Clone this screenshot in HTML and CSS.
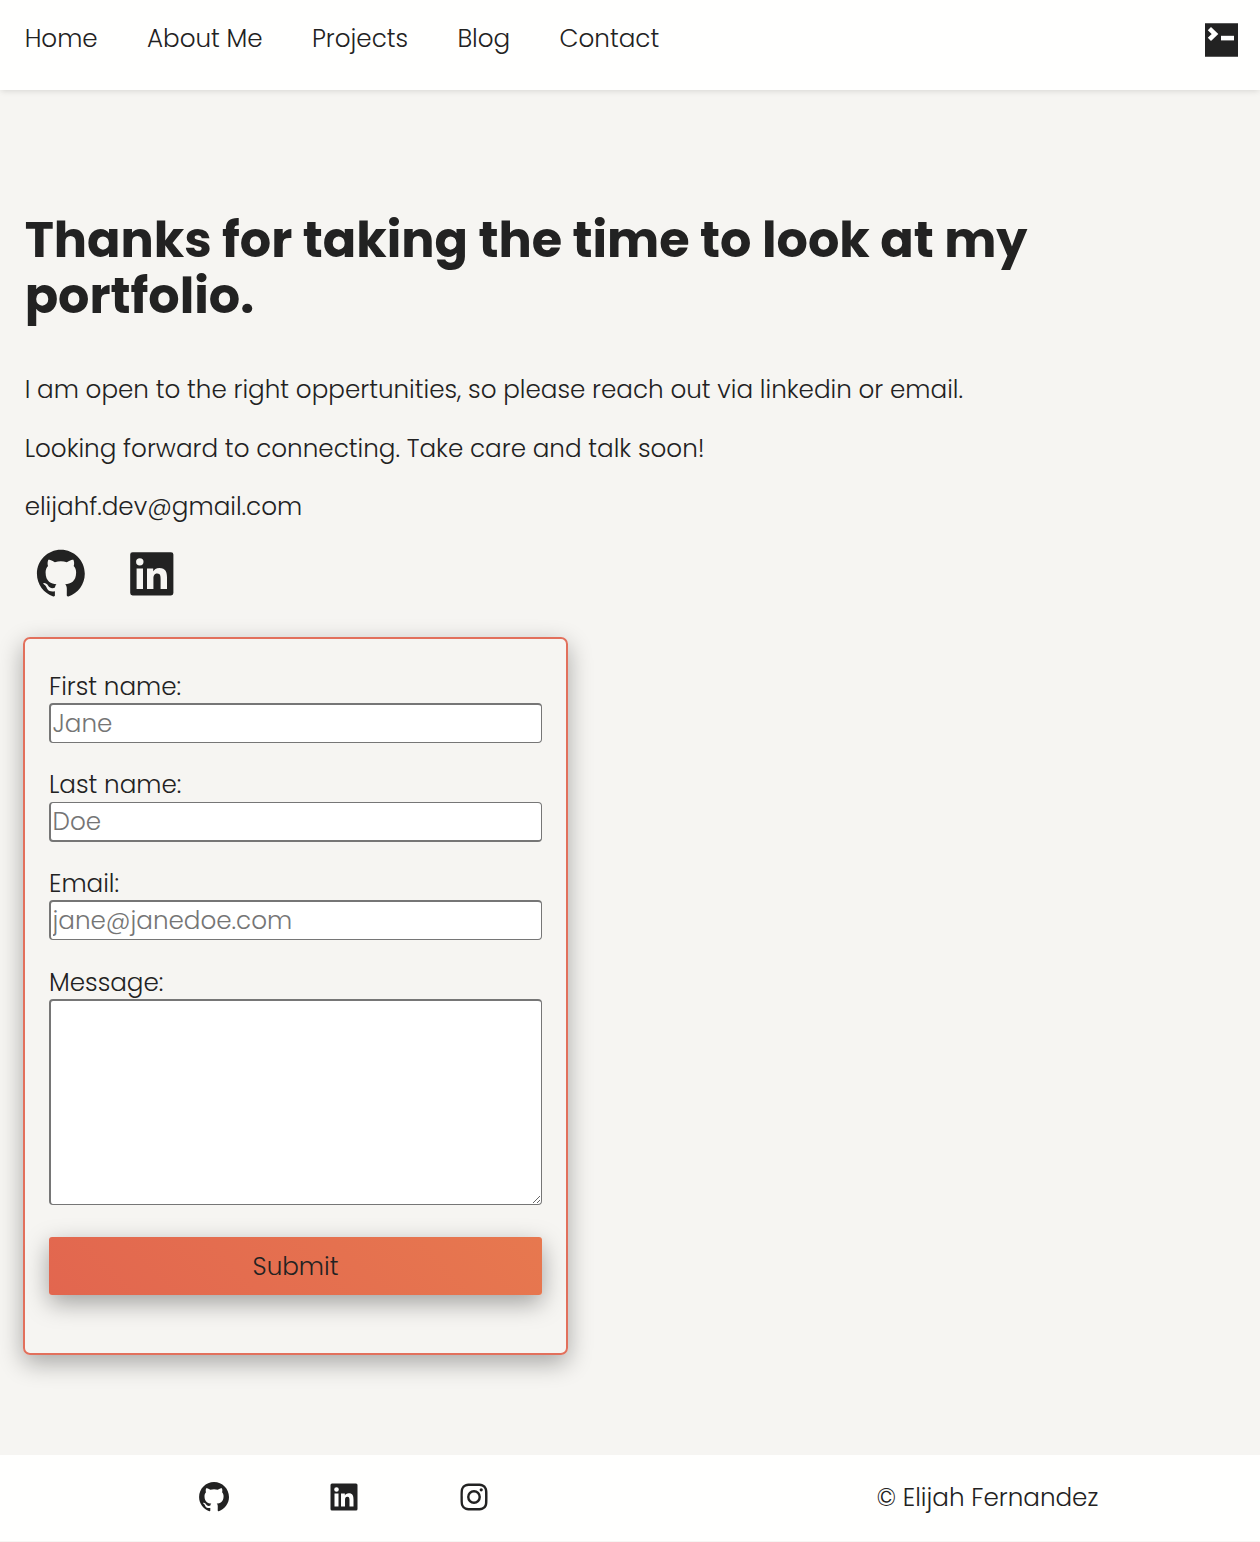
FILE: index.html
```
<!DOCTYPE html>
<html lang="en">
<head>
<meta charset="utf-8">
<title>Contact | Elijah Fernandez</title>
<link rel="stylesheet" href="styles.css">
</head>
<body>
<svg class="sprite" aria-hidden="true">
  <symbol id="github" viewBox="0 0 24 24"><path d="M12.026 2c-5.509 0-9.974 4.465-9.974 9.974 0 4.406 2.857 8.145 6.821 9.465.499.09.679-.217.679-.481 0-.237-.008-.865-.011-1.696-2.775.602-3.361-1.338-3.361-1.338-.452-1.152-1.107-1.459-1.107-1.459-.905-.619.069-.605.069-.605 1.002.07 1.527 1.028 1.527 1.028.89 1.524 2.336 1.084 2.902.829.091-.645.351-1.085.635-1.334-2.214-.251-4.542-1.107-4.542-4.93 0-1.087.389-1.979 1.024-2.675-.101-.253-.446-1.268.099-2.64 0 0 .837-.269 2.742 1.021a9.582 9.582 0 0 1 2.496-.336 9.554 9.554 0 0 1 2.496.336c1.906-1.291 2.742-1.021 2.742-1.021.545 1.372.203 2.387.099 2.64.64.696 1.024 1.587 1.024 2.675 0 3.833-2.33 4.675-4.552 4.922.355.308.675.916.675 1.846 0 1.334-.012 2.41-.012 2.737 0 .267.178.577.687.479C19.146 20.115 22 16.379 22 11.974 22 6.465 17.535 2 12.026 2z"/></symbol>
  <symbol id="linkedin" viewBox="0 0 24 24"><path d="M20 3H4a1 1 0 0 0-1 1v16a1 1 0 0 0 1 1h16a1 1 0 0 0 1-1V4a1 1 0 0 0-1-1zM8.339 18.337H5.667v-8.59h2.672v8.59zM7.003 8.574a1.548 1.548 0 1 1 0-3.096 1.548 1.548 0 0 1 0 3.096zm11.335 9.763h-2.669V14.16c0-.996-.018-2.277-1.388-2.277-1.39 0-1.601 1.086-1.601 2.207v4.248h-2.667v-8.59h2.56v1.174h.037c.355-.675 1.227-1.387 2.524-1.387 2.704 0 3.203 1.778 3.203 4.092v4.71z"/></symbol>
  <symbol id="instagram" viewBox="0 0 24 24"><path d="M11.999 7.377a4.623 4.623 0 1 0 0 9.248 4.623 4.623 0 0 0 0-9.248zm0 7.627a3.004 3.004 0 1 1 0-6.008 3.004 3.004 0 0 1 0 6.008z"/><circle cx="16.806" cy="7.207" r="1.078"/><path d="M20.533 6.111A4.605 4.605 0 0 0 17.9 3.479a6.606 6.606 0 0 0-2.186-.42c-.963-.042-1.268-.054-3.71-.054s-2.755 0-3.71.054a6.554 6.554 0 0 0-2.184.42 4.6 4.6 0 0 0-2.633 2.632 6.585 6.585 0 0 0-.419 2.186c-.043.962-.056 1.267-.056 3.71 0 2.442 0 2.753.056 3.71.015.748.156 1.486.419 2.187a4.61 4.61 0 0 0 2.634 2.632 6.584 6.584 0 0 0 2.185.45c.963.042 1.268.055 3.71.055s2.755 0 3.71-.055a6.615 6.615 0 0 0 2.186-.419 4.613 4.613 0 0 0 2.633-2.633c.263-.7.404-1.438.419-2.186.043-.962.056-1.267.056-3.71s0-2.753-.056-3.71a6.581 6.581 0 0 0-.421-2.217zm-1.218 9.532a5.043 5.043 0 0 1-.311 1.688 2.987 2.987 0 0 1-1.712 1.711 4.985 4.985 0 0 1-1.67.311c-.95.044-1.218.055-3.654.055-2.438 0-2.687 0-3.655-.055a4.96 4.96 0 0 1-1.669-.311 2.985 2.985 0 0 1-1.719-1.711 5.08 5.08 0 0 1-.311-1.669c-.043-.95-.053-1.218-.053-3.654 0-2.437 0-2.686.053-3.655a5.038 5.038 0 0 1 .311-1.687c.305-.789.93-1.41 1.719-1.712a5.01 5.01 0 0 1 1.669-.311c.951-.043 1.218-.055 3.655-.055s2.687 0 3.654.055a4.96 4.96 0 0 1 1.67.311 2.991 2.991 0 0 1 1.712 1.712 5.08 5.08 0 0 1 .311 1.669c.043.951.055 1.218.055 3.655 0 2.436 0 2.698-.043 3.654h-.011z"/></symbol>
</svg>

<header class="header">
  <nav class="nav">
    <a>Home</a>
    <a>About Me</a>
    <a>Projects</a>
    <a>Blog</a>
    <a>Contact</a>
  </nav>
  <svg class="terminal" viewBox="0 0 33 34"><path fill="#222" d="M0 .3h33v33.4H0z"/><path d="M4.4 5.6l5.6 5.4-5.6 5.4" fill="none" stroke="#fffffe" stroke-width="4.6"/><path fill="#fffffe" d="M16 12.8h13v4.6H16z"/></svg>
</header>

<main class="main">
  <h1 class="title">Thanks for taking the time to look at my portfolio.</h1>
  <p class="text">I am open to the right oppertunities, so please reach out via linkedin or email.</p>
  <p class="text">Looking forward to connecting. Take care and talk soon!</p>
  <p class="text">elijahf.dev@gmail.com</p>
  <div class="socials">
    <svg class="icon-lg"><use href="#github"/></svg>
    <svg class="icon-lg"><use href="#linkedin"/></svg>
  </div>
  <form class="form">
    <div class="field">
      <label for="first">First name:</label>
      <input class="input" id="first" type="text" placeholder="Jane">
    </div>
    <div class="field field-last">
      <label for="last">Last name:</label>
      <input class="input input-last" id="last" type="text" placeholder="Doe">
    </div>
    <div class="field">
      <label for="email">Email:</label>
      <input class="input" id="email" type="email" placeholder="jane@janedoe.com">
    </div>
    <div class="field">
      <label for="message">Message:</label>
      <textarea class="input area" id="message"></textarea>
    </div>
    <button class="submit" type="button">Submit</button>
  </form>
</main>

<footer class="footer">
  <div class="footer-icons">
    <svg class="icon-sm"><use href="#github"/></svg>
    <svg class="icon-sm"><use href="#linkedin"/></svg>
    <svg class="icon-sm"><use href="#instagram"/></svg>
  </div>
  <p class="copyright">© Elijah Fernandez</p>
</footer>
</body>
</html>
```
FILE: styles.css
```
* { box-sizing: border-box; }
body {
  margin: 0;
  background: #f6f5f2;
  color: #222;
  font-family: Poppins, Inter, sans-serif;
  font-feature-settings: "cv11";
  font-size: 24.65px;
  font-weight: 300;
}
.sprite { display: none; }
svg { fill: #222; }

.header {
  display: flex;
  justify-content: space-between;
  align-items: flex-start;
  height: 89.5px;
  padding: 19px 22px 0 24.64px;
  background: #fffffe;
  box-shadow: 0 2px 6px -1px rgba(0, 0, 0, .13);
}
.nav { display: flex; gap: 49.28px; padding-top: 1px; line-height: 38px; }
.terminal { width: 33px; height: 34px; margin-top: 4px; }

.main { height: 1365.5px; padding: 122.5px 24.64px 0; }
.title {
  width: 1100px;
  margin: 0 0 47px;
  font-size: 49.3px;
  font-weight: 700;
  line-height: 56px;
}
.text { margin: 0 0 20.6px; line-height: 38px; }
.socials { display: flex; gap: 33px; padding-left: 7.4px; margin-top: -1.4px; }
.icon-lg { width: 57.6px; height: 57.6px; }

.form {
  width: 545px;
  height: 718px;
  margin: 33.8px 0 0 -1.64px;
  padding: 29px 24px 0;
  border: 2px solid #e2705c;
  border-radius: 7px;
  box-shadow: 0 8px 24px rgba(0, 0, 0, .32);
}
.field { display: flex; flex-direction: column; margin-bottom: 24px; }
.field label { height: 35px; line-height: 37px; }
.field-last { margin-bottom: 23px; }
.field-last label { line-height: 35px; }
.input {
  width: 493px;
  height: 40px;
  padding: 0 1.5px;
  background: #fff;
  border: solid #767676;
  border-width: 2px 1px 1px 2px;
  border-radius: 4px;
  font: inherit;
}
.input::placeholder { color: #757575; }
.input-last { border-width: 1px 1px 2px 2px; }
.area { height: 206px; resize: both; }
.submit {
  display: block;
  width: 493px;
  height: 58px;
  margin-top: 32px;
  padding: 2px 0 0;
  border: 0;
  border-radius: 3px;
  background: linear-gradient(45deg, #e2664f, #e7784f);
  box-shadow: 0 8px 24px rgba(0, 0, 0, .35);
  color: #222;
  font: inherit;
}

.footer {
  display: flex;
  justify-content: space-between;
  align-items: center;
  height: 86px;
  margin-bottom: 1px;
  padding: 0 161.7px 1px 195.7px;
  background: #fffffe;
}
.footer-icons { display: flex; gap: 94px; padding-bottom: 1px; }
.icon-sm { width: 36px; height: 36px; }
.copyright { margin: 0; }
```
